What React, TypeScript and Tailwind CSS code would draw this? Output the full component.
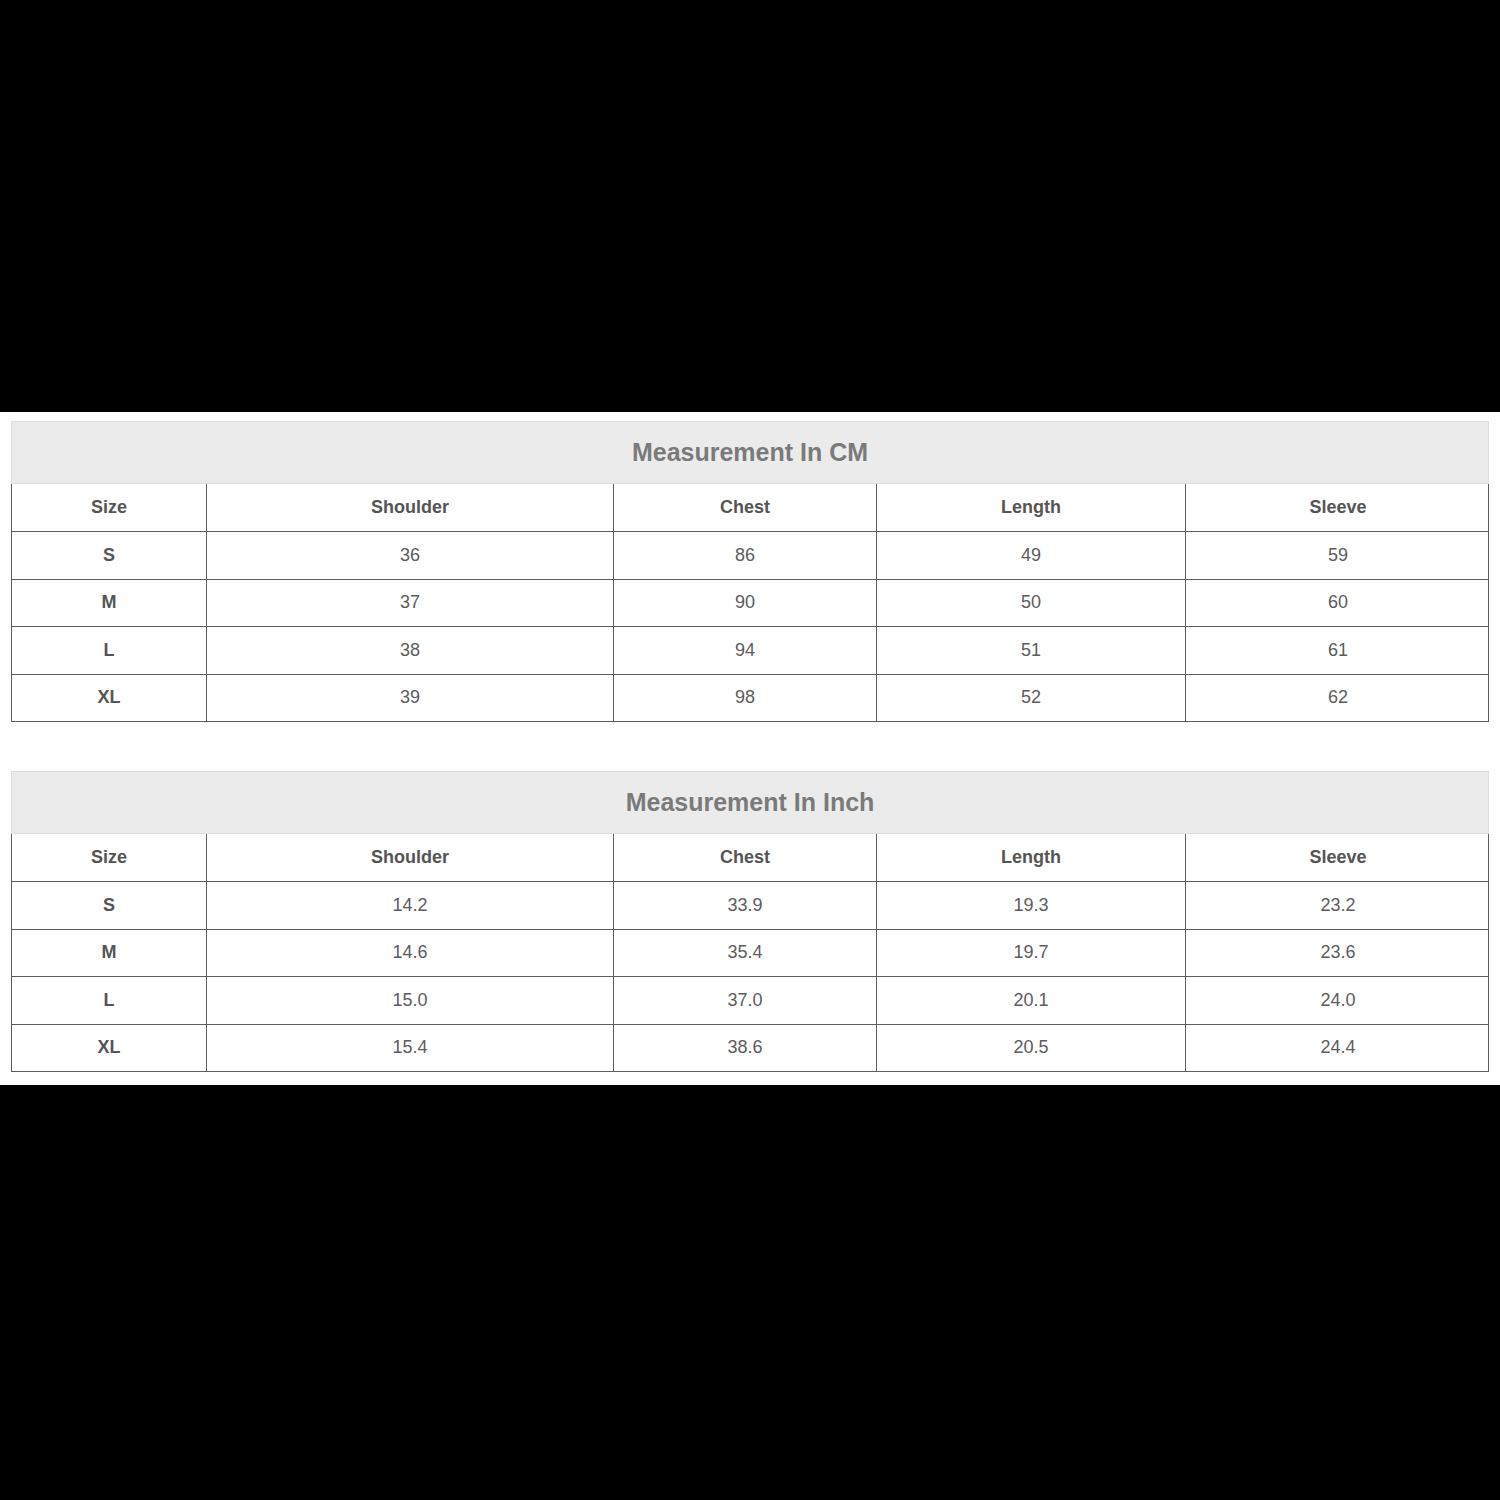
const cols = ['Size', 'Shoulder', 'Chest', 'Length', 'Sleeve'];

const cmRows = [
  ['S', '36', '86', '49', '59'],
  ['M', '37', '90', '50', '60'],
  ['L', '38', '94', '51', '61'],
  ['XL', '39', '98', '52', '62'],
];

const inchRows = [
  ['S', '14.2', '33.9', '19.3', '23.2'],
  ['M', '14.6', '35.4', '19.7', '23.6'],
  ['L', '15.0', '37.0', '20.1', '24.0'],
  ['XL', '15.4', '38.6', '20.5', '24.4'],
];

function Row({ cells, head }: { cells: string[]; head?: boolean }) {
  return (
    <div
      className={`grid grid-cols-[195px_407px_263px_309px_304px] border-b border-[#5e5e5e] ${
        head ? 'h-[48px]' : 'h-[47.5px]'
      }`}
    >
      {cells.map((c, i) => (
        <div
          key={i}
          className={`flex items-center justify-center text-[18px] ${
            i < cells.length - 1 ? 'border-r border-[#5e5e5e]' : ''
          } ${head || i === 0 ? 'font-bold text-[#555]' : 'text-[#5c5c5c]'}`}
        >
          {c}
        </div>
      ))}
    </div>
  );
}

function SizeTable({ title, rows }: { title: string; rows: string[][] }) {
  return (
    <div>
      <div className="h-[63px] bg-[#ebebeb] border border-[#dedede] flex items-center justify-center text-[25px] font-bold text-[#7a7a7a]">
        {title}
      </div>
      <div className="border-x border-[#5e5e5e]">
        <Row cells={cols} head />
        {rows.map((r) => (
          <Row key={r[0]} cells={r} />
        ))}
      </div>
    </div>
  );
}

export default function App() {
  return (
    <div className="bg-black h-[1500px] pt-[412px] font-['Liberation_Sans',Arial,sans-serif]">
      <div className="bg-white h-[673px] px-[11px] pt-[9px] flex flex-col gap-[49px]">
        <SizeTable title="Measurement In CM" rows={cmRows} />
        <SizeTable title="Measurement In Inch" rows={inchRows} />
      </div>
    </div>
  );
}
